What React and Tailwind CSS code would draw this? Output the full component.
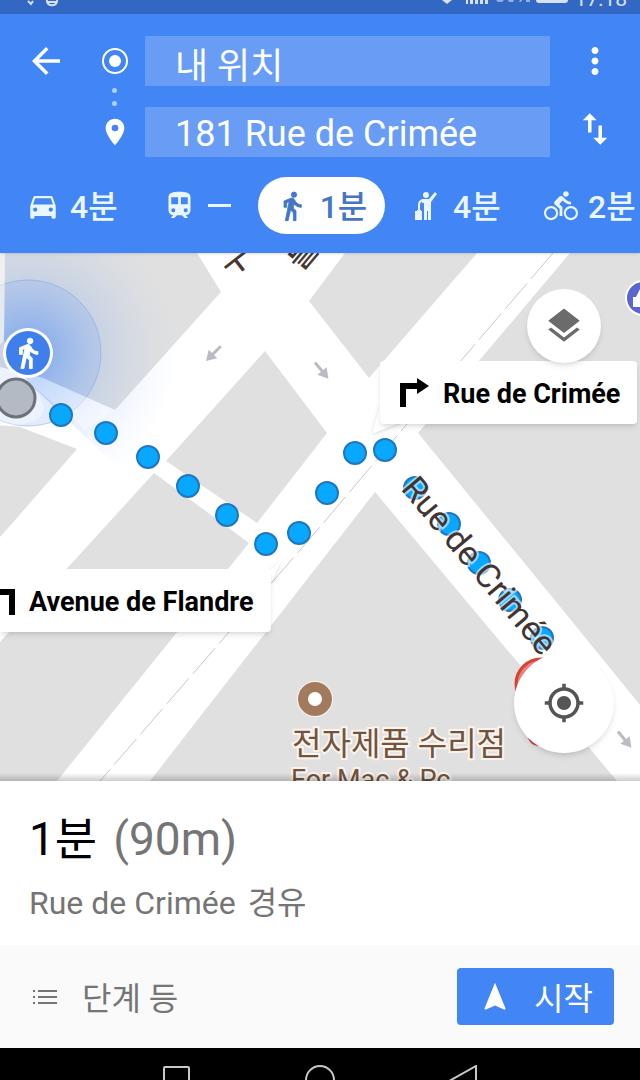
import { useState } from 'react';
import {
  MdArrowBack,
  MdDirectionsBike,
  MdDirectionsCar,
  MdLayers,
  MdMoreVert,
  MdMyLocation,
  MdNavigation,
  MdPlace,
  MdSwapVert,
} from 'react-icons/md';

function TransitIcon({ size, className }) {
  return (
    <svg width={size} height={size} viewBox="0 0 24 24" fill="currentColor" className={className}>
      <path
        fillRule="evenodd"
        d="M12 2C7.6 2 4 2.5 4 6v9.5C4 17.4 5.6 19 7.5 19L6 20.5v.5h2.200l2-2h3.600l2 2H18v-.5L16.500 19c1.900 0 3.500-1.600 3.500-3.500V6c0-3.500-3.600-4-8-4zM6 6h5v5H6zM13 6h5v5h-5zM6 15.500a1.500 1.500 0 1 0 3 0a1.500 1.500 0 1 0-3 0zM15 15.500a1.500 1.500 0 1 0 3 0a1.500 1.500 0 1 0-3 0z"
      />
    </svg>
  );
}

function WalkIcon({ size, ...props }) {
  return (
    <svg width={size} height={size} viewBox="0 0 24 24" fill="currentColor" stroke="currentColor" strokeWidth="0.6" {...props}>
      <circle cx="13.5" cy="3.5" r="2" />
      <path d="M9.800 8.900L7 23h2.100l1.800-8 2.100 2v6h2v-7.500l-2.100-2 .6-3C14.800 12 16.800 13 19 13v-2c-1.900 0-3.500-1-4.300-2.400l-1-1.600c-.4-.6-1-1-1.700-1-.3 0-.5.1-.8.1L6 8.300V13h2V9.600z" />
    </svg>
  );
}

function HailIcon({ size, className }) {
  return (
    <svg width={size} height={size} viewBox="0 0 32 32" fill="currentColor" className={className}>
      <circle cx="13" cy="5" r="3" />
      <path d="M9 9h7l6-7 2 2-6 8v18h-3v-9h-1v9h-3V13H9z" />
      <path d="M10 10Q6 11 6 15V21" fill="none" stroke="currentColor" strokeWidth="2" />
      <path d="M2 21h2v-1h4v1h1v9H2z" />
    </svg>
  );
}

const modes = [
  { id: 'car', label: '4분', Icon: MdDirectionsCar, size: 34, className: 'w-[109px] gap-[10px]' },
  { id: 'transit', label: '—', Icon: TransitIcon, size: 33, className: 'w-[67px] gap-[12px]' },
  { id: 'walk', label: '1분', Icon: WalkIcon, size: 32, className: 'w-[127px] gap-[12px]' },
  { id: 'hail', label: '4분', Icon: HailIcon, size: 32, className: 'w-[103px] gap-2' },
  { id: 'bike', label: '2분', Icon: MdDirectionsBike, size: 34, className: 'gap-[10px]' },
];

const blocks = [
  '0,253 197,253 221,292 115,410 43,378 0,367',
  '0,425 20,427 77,449 16,519 0,537',
  '154,473 249,543 57,781 0,781 0,642',
  '265,351 327,433 257,523 166,461',
  '345,253 309,301 369,378 477,253',
  '570,253 418,433 553,598 640,705 640,253',
  '375,492 617,781 150,781',
];

const routeDots = [
  [61, 415], [106, 433], [148, 457], [188, 486], [227, 515],
  [266, 544], [299, 533], [327, 493], [355, 453], [385, 450],
  [415, 488], [449, 524], [479, 563], [510, 600], [542, 638],
];

const streetArrows = [
  [213, 354, 135],
  [322, 371, 50],
  [625, 740, 50],
];

function StatusBar() {
  return (
    <div className="flex h-[14px] items-end justify-between overflow-hidden bg-[#3367c4] pr-[13px] pb-1 pl-[27px] text-white/80">
      <svg width="36" height="10" viewBox="0 0 36 10" fill="none" stroke="currentColor" strokeWidth="2">
        <path d="M1 1l3 3 2-3" />
        <path d="M20 0c-1 7 11 7 10 0M21 2h8" />
      </svg>
      <div className="flex items-end gap-[7px]">
        <svg width="126" height="10" viewBox="0 0 126 10" fill="currentColor">
          <path d="M0 0h10l-5 4z" />
          <path d="M24 0h2v4h-2zM28 0h3v4h-3zM33 0h3v4h-3zM38 0h3v4h-3zM43 0h3v4h-3z" />
          <path d="M54 0h8l-2 2h-4zM66 0h6l-1 2h-4zM78 0h2l-1 2h-2zM84 0h4v2h-4z" opacity="0.6" />
          <path d="M94 0h32q0 3-3 3h-26q-3 0-3-3z" />
        </svg>
        <span className="text-[21px] leading-[21px]">17:18</span>
      </div>
    </div>
  );
}

function Header() {
  const [mode, setMode] = useState('walk');
  const [origin, setOrigin] = useState('내 위치');
  const [target, setTarget] = useState('181 Rue de Crimée');

  return (
    <header className="relative z-10 bg-[#4285f4] pt-[22px] pb-[19px] text-white shadow">
      <div className="flex">
        <div className="flex w-[92px] items-start">
          <button type="button" aria-label="뒤로" className="flex h-[50px] w-full items-center justify-center">
            <MdArrowBack size={42} />
          </button>
        </div>
        <div className="flex w-[45px] flex-col items-center justify-between">
          <div className="flex h-[50px] items-center">
            <svg width="28" height="28" viewBox="0 0 28 28">
              <circle cx="14" cy="14" r="12" fill="none" stroke="currentColor" strokeWidth="2" />
              <circle cx="14" cy="14" r="6" fill="currentColor" />
            </svg>
          </div>
          <div className="flex flex-col gap-2 text-[#a9d2ff]">
            <span className="size-[5px] rounded-full bg-current" />
            <span className="size-[5px] rounded-full bg-current" />
          </div>
          <div className="flex h-[50px] items-center">
            <MdPlace size={32} />
          </div>
        </div>
        <div className="ml-2 flex min-w-0 flex-1 flex-col gap-[21px]">
          <input
            aria-label="출발지"
            value={origin}
            onChange={(e) => setOrigin(e.target.value)}
            className="h-[50px] w-full bg-[#699df5] px-[30px] pt-1 text-[36px] leading-[46px] outline-none"
          />
          <input
            aria-label="도착지"
            value={target}
            onChange={(e) => setTarget(e.target.value)}
            className="h-[50px] w-full bg-[#699df5] px-[30px] pt-1 text-[36px] leading-[46px] outline-none"
          />
        </div>
        <div className="flex w-[90px] flex-col items-center gap-[18px]">
          <button type="button" aria-label="메뉴" className="flex h-[50px] items-center">
            <MdMoreVert size={42} />
          </button>
          <button type="button" aria-label="출발지와 도착지 바꾸기" className="flex h-[50px] items-center">
            <MdSwapVert size={42} />
          </button>
        </div>
      </div>

      <div className="mt-5 flex gap-7 overflow-hidden pl-[26px]">
        {modes.map(({ id, label, Icon, size, className }) => (
          <button
            key={id}
            type="button"
            aria-pressed={mode === id}
            onClick={() => setMode(id)}
            className={`flex h-[57px] shrink-0 items-center rounded-full text-[32px] leading-10 font-medium whitespace-nowrap ${className} ${
              mode === id ? 'justify-center bg-white text-[#4576c6]' : 'text-[#eaf6ff]'
            }`}
          >
            <Icon size={size} className="shrink-0" />
            {label === '—' ? (
              <span className="h-[3px] w-[23px] shrink-0 bg-current" />
            ) : (
              <span className="pt-0.5">{label}</span>
            )}
          </button>
        ))}
      </div>
    </header>
  );
}

function MapCanvas() {
  return (
    <svg
      className="absolute inset-0 h-full w-full"
      viewBox="0 253 640 528"
      preserveAspectRatio="xMinYMin slice"
    >
      <defs>
        <radialGradient id="beam" gradientUnits="userSpaceOnUse" cx="28" cy="353" r="150">
          <stop offset="0" stopColor="#4285f4" stopOpacity="0.6" />
          <stop offset="0.45" stopColor="#6a9df5" stopOpacity="0.22" />
          <stop offset="1" stopColor="#a9c6fa" stopOpacity="0" />
        </radialGradient>
      </defs>
      <rect y="253" width="640" height="528" fill="#ffffff" />
      {blocks.map((points) => (
        <polygon key={points} points={points} fill="#e0e0e0" />
      ))}
      <path d="M553 253L407 424L320 527L100 781" fill="none" stroke="#c9c9c9" strokeWidth="1" strokeDasharray="34 6" />

      <circle cx="28" cy="353" r="73" fill="#6fa0f5" fillOpacity="0.2" stroke="#7c9fe0" strokeOpacity="0.5" />
      <path d="M5 253H200V470H120L28 382L4 340Z" fill="url(#beam)" />
      <path d="M0 253H5L4 340L0 345Z" fill="#ffffff" opacity="0.5" />
      <path d="M0 367L43 378L115 410L85 430L28 382Q70 425 0 426Z" fill="#ffffff" opacity="0.35" />

      {streetArrows.map(([x, y, angle]) => (
        <g key={x} transform={`translate(${x} ${y}) rotate(${angle})`}>
          <path d="M-11 0H3" stroke="#b9bcc3" strokeWidth="3" />
          <path d="M10 0L0-6V6Z" fill="#b9bcc3" />
        </g>
      ))}

      <g fill="#463733" stroke="#ffffff" strokeWidth="2" paintOrder="stroke" fontSize="32" fontWeight="500">
        <text transform="translate(233 281) rotate(-38)">ㅜ</text>
        <text transform="translate(301 272) rotate(-50)">를</text>
      </g>

      {routeDots.map(([x, y]) => (
        <circle key={x} cx={x} cy={y} r="11" fill="#08a8ff" stroke="#2176bd" strokeWidth="2" />
      ))}

      <circle cx="541" cy="684" r="25" fill="#e9837c" stroke="#d64238" strokeWidth="3" />
      <circle cx="538" cy="736" r="10" fill="#d64248" />

      <text
        transform="translate(400 489) rotate(50)"
        fontSize="34"
        fill="#423433"
        stroke="#ffffff"
        strokeOpacity="0.6"
        strokeWidth="4"
        paintOrder="stroke"
      >
        Rue de Crimée
      </text>

      <circle cx="16" cy="398" r="19" fill="#b4bac4" stroke="#6d727a" strokeWidth="3" />
      <circle cx="28" cy="353" r="25" fill="#ffffff" />
      <circle cx="28" cy="353" r="22" fill="#3f7fec" />
      <WalkIcon x="11" y="336" size={34} color="#ffffff" />

      <circle cx="643" cy="298" r="18" fill="#ffffff" />
      <circle cx="643" cy="298" r="16" fill="#5a66cf" />
      <path d="M633 297h3l4-8q3 0 2 4v4h6v10h-15z" fill="#ffffff" />

      <circle cx="315" cy="699" r="18" fill="#fdf6ee" />
      <circle cx="315" cy="699" r="12" fill="#ffffff" stroke="#a47a5e" strokeWidth="10" />
      <g fill="#6f5443" stroke="#fdf3ea" strokeWidth="4" paintOrder="stroke">
        <text x="292" y="755" fontSize="32">전자제품 수리점</text>
        <text x="291" y="789" fontSize="27">For Mac &amp; Pc</text>
      </g>

      <g fill="#ffffff">
        <path d="M380 405L372 434L402 422Z" className="drop-shadow" />
        <path d="M262 576L281 561L272 582Z" className="drop-shadow" />
      </g>
    </svg>
  );
}

function RouteMap() {
  return (
    <main className="relative min-h-[528px] flex-1 overflow-hidden bg-[#e0e0e0]">
      <MapCanvas />

      <div className="absolute top-[108px] left-[380px] flex h-[63px] items-center gap-[14px] rounded-sm bg-white pr-[17px] pl-[19px] text-[27px] font-bold whitespace-nowrap text-black shadow-md">
        <svg width="30" height="30" viewBox="0 0 30 30">
          <path d="M4 29V8H20" fill="none" stroke="currentColor" strokeWidth="6" />
          <path d="M18 0L30 8L18 16Z" fill="currentColor" />
        </svg>
        <span className="pt-1">Rue de Crimée</span>
      </div>

      <div className="absolute top-[316px] left-0 flex h-[63px] items-center gap-[14px] rounded-r-sm bg-white pr-[17px] text-[27px] font-bold whitespace-nowrap text-black shadow-md">
        <svg width="15" height="30" viewBox="0 0 15 30">
          <path d="M0 6H12V29" fill="none" stroke="currentColor" strokeWidth="6" />
        </svg>
        <span className="pt-1">Avenue de Flandre</span>
      </div>

      <button
        type="button"
        aria-label="레이어"
        className="absolute top-9 right-[39px] flex size-[74px] items-center justify-center rounded-full bg-white text-[#6b6b6b] shadow-md"
      >
        <MdLayers size={42} />
      </button>
      <button
        type="button"
        aria-label="현재 위치"
        className="absolute right-[26px] bottom-7 flex size-[100px] items-center justify-center rounded-full bg-white text-[#555555] shadow-md"
      >
        <MdMyLocation size={42} />
      </button>
      <div className="absolute inset-x-0 bottom-0 h-2 bg-linear-to-t from-black/20 to-transparent" />
    </main>
  );
}

export default function App() {
  return (
    <div className="flex min-h-screen flex-col bg-white font-['Roboto','Noto_Sans_CJK_KR',sans-serif]">
      <StatusBar />
      <Header />
      <RouteMap />

      <section className="px-[29px] pt-[30px] pb-[22px]">
        <h1 className="flex gap-4 text-[46px] leading-[56px] text-black">
          1분 <span className="text-[#757575]">(90m)</span>
        </h1>
        <p className="mt-4 flex gap-3 text-[32px] leading-10 text-[#757575]">
          <span>Rue de Crimée</span>
          <span>경유</span>
        </p>
      </section>

      <footer className="flex h-[103px] items-center justify-between bg-[#fafafa] pr-[26px] pl-8">
        <button type="button" className="flex items-center gap-[25px] text-[32px] leading-10 text-[#757575]">
          <svg width="25" height="18" viewBox="0 0 25 18" stroke="currentColor" strokeWidth="2">
            <path d="M1 3h2M1 9h2M1 15h2M6 3h19M6 9h19M6 15h19" />
          </svg>
          <span className="pt-1">단계 등</span>
        </button>
        <button
          type="button"
          className="flex h-[57px] items-center gap-[22px] rounded-sm bg-[#4285f4] pr-[21px] pl-[21px] text-[32px] leading-10 text-white"
        >
          <MdNavigation size={34} />
          <span className="pt-1">시작</span>
        </button>
      </footer>

      <nav className="flex h-8 items-start justify-center gap-[114px] overflow-hidden bg-black pt-[17px] text-[#c8c8c8]">
        <button type="button" aria-label="최근 앱">
          <svg width="29" height="30" viewBox="0 0 29 30" fill="none" stroke="currentColor" strokeWidth="2">
            <rect x="2" y="2" width="25" height="25" rx="1" />
          </svg>
        </button>
        <button type="button" aria-label="홈">
          <svg width="30" height="30" viewBox="0 0 30 30" fill="none" stroke="currentColor" strokeWidth="2">
            <circle cx="15" cy="15" r="14" />
          </svg>
        </button>
        <button type="button" aria-label="뒤로 가기">
          <svg width="29" height="30" viewBox="0 0 29 30" fill="none" stroke="currentColor" strokeWidth="2">
            <path d="M27 1V29L2 15Z" />
          </svg>
        </button>
      </nav>
    </div>
  );
}
